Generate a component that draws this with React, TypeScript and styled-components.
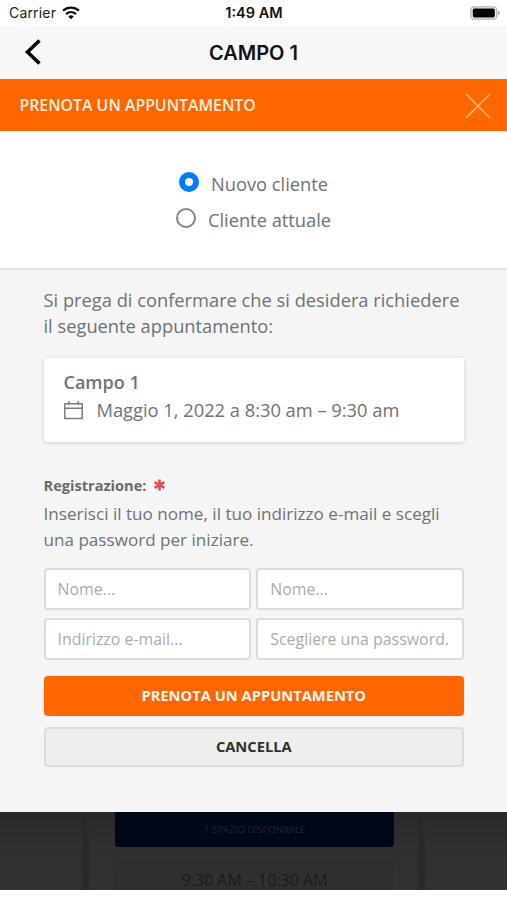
import React from "react";
import styled, { createGlobalStyle, css } from "styled-components";

const GlobalStyle = createGlobalStyle`
  *, *::before, *::after { box-sizing: border-box; }
  body { margin: 0; background: #fff; font-family: "Open Sans", "Noto Sans", sans-serif; }
  h1, h2, p { margin: 0; }
`;

const Screen = styled.main`
  width: 507px;
  height: 900px;
  overflow: hidden;
  background: #fff;
  color: #6f7277;
`;

const StatusBar = styled.header`
  display: grid;
  grid-template-columns: 1fr auto 1fr;
  align-items: center;
  height: 26px;
  padding: 0 7px 0 9px;
  font: 400 14px/26px Inter, sans-serif;
  color: #222;
`;

const Carrier = styled.div`
  display: flex;
  align-items: center;
  gap: 6px;
  letter-spacing: 0.18px;
`;

const Clock = styled.time`
  font-weight: 600;
  font-size: 14.5px;
  margin-right: 1px;
  color: #111;
`;

const Battery = styled.svg`
  justify-self: end;
  display: block;
`;

const NavBar = styled.nav`
  display: grid;
  grid-template-columns: 60px 1fr 60px;
  align-items: center;
  height: 53px;
  background: #f7f7f7;
`;

const BackButton = styled.button`
  display: flex;
  padding: 0 0 2px 23px;
  border: 0;
  background: none;
`;

const NavTitle = styled.h1`
  text-align: center;
  font: 600 20px/52px Inter, sans-serif;
  color: #111;
`;

const ModalHeader = styled.div`
  display: flex;
  align-items: center;
  justify-content: space-between;
  height: 52px;
  padding: 0 16px 0 19.5px;
  background: #ff6600;
  color: #fff0df;
`;

const ModalTitle = styled.h2`
  font-size: 15.85px;
  font-weight: 600;
  line-height: 52px;
`;

const CloseButton = styled.button`
  display: flex;
  padding: 1px 0 0;
  border: 0;
  background: none;
`;

const ClientChoice = styled.div`
  display: flex;
  flex-direction: column;
  align-items: center;
  height: 139px;
  padding-top: 35px;
  background: #fff;
  border-bottom: 2px solid #e3e3e3;
`;

const Option = styled.label`
  display: flex;
  align-items: center;
  gap: 12px;
  height: 36px;
  font-size: 18.3px;
  line-height: 36px;
`;

const Radio = styled.span<{ $checked?: boolean }>`
  width: 20px;
  height: 20px;
  margin-top: -4px;
  border-radius: 50%;
  background: #fff;
  border: ${(p) => (p.$checked ? "6px solid #007bff" : "2px solid #858585")};
`;

const ModalBody = styled.section`
  height: 542px;
  padding: 17px 43px 0 43.5px;
  background: #f5f5f5;
`;

const Intro = styled.p`
  font-size: 18.3px;
  line-height: 26px;
  white-space: nowrap;
`;

const Card = styled.article`
  height: 84px;
  margin-top: 19px;
  padding: 10px 20px 0;
  border-radius: 3px;
  background: #fff;
  box-shadow: 0 1px 4px rgba(0, 0, 0, 0.15);
`;

const CardTitle = styled.div`
  font-size: 18px;
  font-weight: 600;
  line-height: 28px;
`;

const CardTime = styled.div`
  display: flex;
  align-items: center;
  gap: 14px;
  font-size: 18.3px;
  line-height: 28px;
  white-space: nowrap;
`;

const FormLabel = styled.div`
  display: flex;
  align-items: center;
  gap: 8px;
  margin-top: 30px;
  height: 26px;
  font-size: 14.6px;
  font-weight: 700;
  color: #686a70;
`;

const FormText = styled.p`
  margin-top: 3px;
  font-size: 17.1px;
  line-height: 26px;
  white-space: nowrap;
`;

const Fields = styled.div`
  display: grid;
  grid-template-columns: 1fr 1fr;
  gap: 8px 5px;
  margin-top: 15px;
`;

const Field = styled.input`
  width: 100%;
  height: 42px;
  padding: 0 12px;
  border: 2px solid #dcdcdc;
  border-radius: 4px;
  background: #fff;
  font: 400 15.9px "Open Sans", sans-serif;
  outline: 0;
  &::placeholder { color: #ababab; opacity: 1; }
`;

const ActionButton = styled.button<{ $primary?: boolean }>`
  display: block;
  width: 100%;
  height: 40px;
  padding: 0 0 2px;
  border-radius: 4px;
  font: 700 14.7px "Open Sans", sans-serif;
  ${(p) =>
    p.$primary
      ? css`
          margin-top: 16px;
          border: 0;
          background: #ff6600;
          color: #fff7ef;
        `
      : css`
          margin-top: 11px;
          border: 2px solid #dcdcdc;
          background: #eee;
          color: #303030;
        `}
`;

const Backdrop = styled.div`
  display: flex;
  justify-content: center;
  height: 78px;
  background: linear-gradient(#292929, #303030 45%, #323232);
`;

const Schedule = styled.div`
  width: 343px;
  height: 78px;
  padding: 0 24px 0 26px;
  border: solid #292929;
  border-width: 0 7px;
  overflow: hidden;
`;

const Slot = styled.div<{ $available?: boolean }>`
  text-align: center;
  white-space: nowrap;
  ${(p) =>
    p.$available
      ? css`
          height: 35px;
          border-radius: 0 0 3px 3px;
          background: #000817;
          color: #202535;
          font-size: 9.7px;
          line-height: 35px;
        `
      : css`
          height: 31px;
          margin-top: 12px;
          background: #2f2f2f;
          color: #1b1b1b;
          font-size: 16px;
          line-height: 43px;
        `}
`;

const WifiIcon = () => (
  <svg width="18" height="14" viewBox="0 0 18 14" fill="none" stroke="#111" strokeWidth="2.3">
    <path d="M1 4.7C5.6.5 12.4.5 17 4.7" />
    <path d="M4 8.1c2.9-2.6 7.1-2.6 10 0" />
    <path d="M6.3 10.4c1.5-1.4 3.9-1.4 5.4 0L9 13.2z" fill="#111" stroke="none" />
  </svg>
);

const CalendarIcon = () => (
  <svg width="19" height="20" viewBox="0 0 19 20" fill="none" stroke="#7b7d80" strokeWidth="1.5">
    <path d="M.8 3.8h17.4v14.6H.8zM.8 8.2h17.4M5 1v4M14.2 1v4" />
  </svg>
);

const AsteriskIcon = () => (
  <svg width="11" height="12" viewBox="0 0 11 12" stroke="#e34a4a" strokeWidth="2.5">
    <path d="M5.5.5v11M.6 3.2l9.8 5.6M10.4 3.2L.6 8.8" />
  </svg>
);

export default function App() {
  return (
    <Screen>
      <GlobalStyle />
      <StatusBar>
        <Carrier>
          <span>Carrier</span>
          <WifiIcon />
        </Carrier>
        <Clock>1:49 AM</Clock>
        <Battery width="30" height="14" viewBox="0 0 30 14">
          <rect x=".8" y=".8" width="26" height="12.4" rx="3.5" fill="#eee" stroke="#b5b5b5" strokeWidth="1.3" />
          <rect x="2.8" y="2.6" width="22" height="8.8" rx="1.6" fill="#000" />
          <path d="M28 4.5c2.6 1 2.6 4 0 5z" fill="#b5b5b5" />
        </Battery>
      </StatusBar>
      <NavBar>
        <BackButton aria-label="Indietro">
          <svg width="20" height="26" viewBox="0 0 20 26" fill="none" stroke="#000" strokeWidth="3.6">
            <path d="M16.5 1.5L4.5 13l12 11.5" />
          </svg>
        </BackButton>
        <NavTitle>CAMPO 1</NavTitle>
      </NavBar>
      <ModalHeader>
        <ModalTitle>PRENOTA UN APPUNTAMENTO</ModalTitle>
        <CloseButton aria-label="Chiudi">
          <svg width="26" height="26" viewBox="0 0 26 26" stroke="#ffb37a" strokeWidth="1.7">
            <path d="M1 1l24 24M25 1L1 25" />
          </svg>
        </CloseButton>
      </ModalHeader>
      <ClientChoice>
        <Option>
          <Radio $checked />
          Nuovo cliente
        </Option>
        <Option>
          <Radio />
          Cliente attuale
        </Option>
      </ClientChoice>
      <ModalBody>
        <Intro>
          Si prega di confermare che si desidera richiedere
          <br />
          il seguente appuntamento:
        </Intro>
        <Card>
          <CardTitle>Campo 1</CardTitle>
          <CardTime>
            <CalendarIcon />
            <span>Maggio 1, 2022 a 8:30 am – 9:30 am</span>
          </CardTime>
        </Card>
        <FormLabel>
          Registrazione:
          <AsteriskIcon />
        </FormLabel>
        <FormText>
          Inserisci il tuo nome, il tuo indirizzo e-mail e scegli
          <br />
          una password per iniziare.
        </FormText>
        <Fields>
          <Field placeholder="Nome..." />
          <Field placeholder="Nome..." />
          <Field placeholder="Indirizzo e-mail..." />
          <Field placeholder="Scegliere una password." />
        </Fields>
        <ActionButton $primary>PRENOTA UN APPUNTAMENTO</ActionButton>
        <ActionButton>CANCELLA</ActionButton>
      </ModalBody>
      <Backdrop>
        <Schedule>
          <Slot $available>1 SPAZIO DISPONIBILE</Slot>
          <Slot>9:30 AM – 10:30 AM</Slot>
        </Schedule>
      </Backdrop>
    </Screen>
  );
}
